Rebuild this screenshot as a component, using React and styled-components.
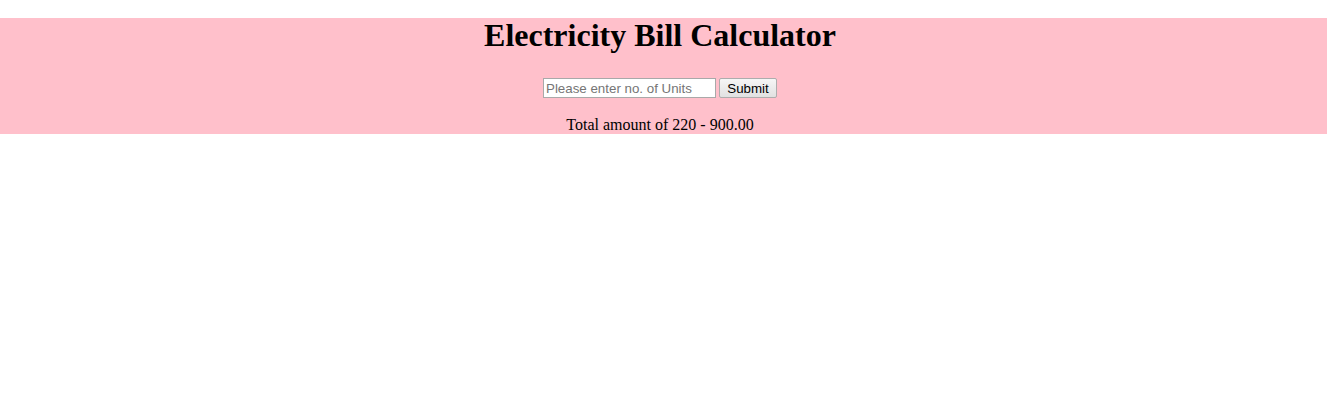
import styled, { createGlobalStyle } from "styled-components";

const GlobalStyle = createGlobalStyle`
  body {
    margin: 0;
    background: #fff;
    font-family: "Liberation Serif", "Times New Roman", serif;
  }
`;

function App() {
  return (
    <>
      <GlobalStyle />
      <Band>
        <Title>Electricity Bill Calculator</Title>
        <Form onSubmit={(e) => e.preventDefault()}>
          <UnitsInput type="text" placeholder="Please enter no. of Units" />
          <SubmitButton type="submit">Submit</SubmitButton>
        </Form>
        <Result>Total amount of 220 - 900.00</Result>
      </Band>
    </>
  );
}

export default App;

const Band = styled.div`
  margin-top: 18px;
  padding-right: 7px;
  background: #ffc0cb;
  display: flex;
  flex-direction: column;
  align-items: center;
  color: #000;
`;

const Title = styled.h1`
  margin: 0 0 25px;
  font-size: 32px;
  line-height: 35px;
  font-weight: bold;
`;

const Form = styled.form`
  display: flex;
  align-items: center;
  gap: 3px;
  height: 20px;
`;

const UnitsInput = styled.input`
  box-sizing: border-box;
  width: 173px;
  height: 20px;
  padding: 1px 2px;
  border: 1px solid #a9a9a9;
  font-family: "Liberation Sans", Arial, sans-serif;
  font-size: 13.33px;
  background: #fff;
  outline: none;

  &::placeholder {
    color: #757575;
  }
`;

const SubmitButton = styled.button`
  box-sizing: border-box;
  width: 58px;
  height: 20px;
  padding: 0 6px;
  border: 1px solid #adadad;
  border-radius: 2px;
  background: linear-gradient(#f6f6f6, #e1e1e1);
  font-family: "Liberation Sans", Arial, sans-serif;
  font-size: 13.33px;
  color: #000;
`;

const Result = styled.p`
  margin: 18px 0 0;
  padding-bottom: 1px;
  font-size: 16px;
  line-height: 17px;
`;
